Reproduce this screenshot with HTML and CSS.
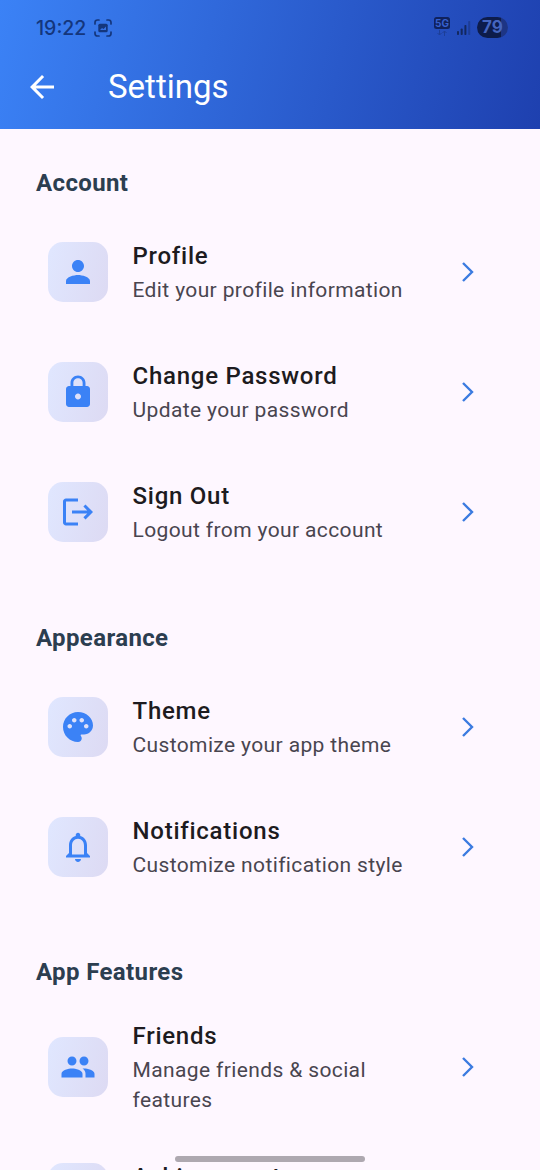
FILE: index.html
```html
<!DOCTYPE html>
<html lang="en"><head><meta charset="utf-8"><title>Settings</title><link rel="stylesheet" href="styles.css"></head>
<body>
<div class="screen">
<header class="appbar">
  <div class="status">
    <span class="clock">19:22</span>
    <svg class="shot" width="18" height="18" viewBox="0 0 18 18" fill="none" stroke="currentColor" stroke-width="1.700" stroke-linecap="round"><path d="M1 5V3.500Q1 1 3.500 1H5M13 1h1.500Q17 1 17 3.500V5M17 13v1.500Q17 17 14.500 17H13M5 17H3.500Q1 17 1 14.500V13"/><rect x="4.300" y="4.700" width="9.400" height="8.600" rx="1.500" fill="currentColor" stroke="none"/><path d="M6 11l2-2 1.500 1 2.500-2.500V11z" fill="#3470e2" stroke="none"/></svg>
    <div class="net"><span class="net-label">5G</span><svg width="12" height="6" viewBox="0 0 12 6" fill="none" stroke="currentColor" stroke-width="1"><path d="M3.500 0v5M1.500 3l2 2 2-2M8.500 6V1M6.500 3l2-2 2 2"/></svg></div>
    <svg class="signal" width="14" height="14" viewBox="0 0 14 14" fill="currentColor"><rect x="0" y="10" width="2" height="4" rx=".8"/><rect x="3.700" y="7.500" width="2" height="6.500" rx=".8"/><rect x="7.400" y="4" width="2" height="10" rx=".8"/><rect x="11.200" y="0" width="2" height="14" rx=".8" opacity=".4"/></svg>
    <span class="battery">79</span>
  </div>
  <div class="toolbar">
    <svg class="back" width="36" height="36" viewBox="0 0 24 24" fill="#fff"><path d="M20 11H7.830l5.590-5.590L12 4l-8 8 8 8 1.410-1.410L7.830 13H20v-2z"/></svg>
    <h1>Settings</h1>
  </div>
</header>
<main>
<section>
  <h2>Account</h2>
  <div class="row"><div class="tile"><svg viewBox="0 0 24 24"><path d="M12 12c2.210 0 4-1.790 4-4s-1.790-4-4-4-4 1.790-4 4 1.790 4 4 4zm0 2c-2.670 0-8 1.340-8 4v2h16v-2c0-2.660-5.330-4-8-4z"/></svg></div><div class="text"><h3>Profile</h3><p>Edit your profile information</p></div><svg class="chev" viewBox="0 0 13 20"><path d="M2 1l9 9-9 9"/></svg></div>
  <div class="row"><div class="tile"><svg viewBox="0 0 24 24"><path d="M18 8h-1V6c0-2.760-2.240-5-5-5S7 3.240 7 6v2H6c-1.100 0-2 .9-2 2v10c0 1.100.9 2 2 2h12c1.100 0 2-.9 2-2V10c0-1.100-.9-2-2-2zm-6 9c-1.100 0-2-.9-2-2s.9-2 2-2 2 .9 2 2-.9 2-2 2zm3.100-9H8.900V6c0-1.710 1.390-3.100 3.100-3.100 1.710 0 3.100 1.390 3.100 3.100v2z"/></svg></div><div class="text"><h3>Change Password</h3><p>Update your password</p></div><svg class="chev" viewBox="0 0 13 20"><path d="M2 1l9 9-9 9"/></svg></div>
  <div class="row"><div class="tile"><svg viewBox="0 0 24 24"><path d="M17 7l-1.410 1.410L18.170 11H8v2h10.170l-2.580 2.580L17 17l5-5zM4 5h8V3H4c-1.100 0-2 .9-2 2v14c0 1.100.9 2 2 2h8v-2H4V5z"/></svg></div><div class="text"><h3>Sign Out</h3><p>Logout from your account</p></div><svg class="chev" viewBox="0 0 13 20"><path d="M2 1l9 9-9 9"/></svg></div>
</section>
<section>
  <h2>Appearance</h2>
  <div class="row"><div class="tile"><svg viewBox="0 0 24 24"><path d="M12 2C6.490 2 2 6.490 2 12s4.490 10 10 10c1.380 0 2.500-1.120 2.500-2.500 0-.61-.23-1.200-.64-1.670-.08-.1-.13-.21-.13-.33 0-.28.22-.5.5-.5H16c3.310 0 6-2.690 6-6 0-4.960-4.490-9-10-9zm5.500 11c-.83 0-1.500-.67-1.500-1.500s.67-1.500 1.500-1.500 1.500.67 1.500 1.500-.67 1.500-1.500 1.500zm-3-4c-.83 0-1.500-.67-1.500-1.500S13.670 6 14.500 6s1.500.67 1.500 1.500S15.330 9 14.500 9zM5 11.500c0-.83.67-1.500 1.500-1.500s1.500.67 1.500 1.500S7.330 13 6.500 13 5 12.330 5 11.500zm6-4c0 .83-.67 1.500-1.500 1.500S8 8.330 8 7.500 8.670 6 9.500 6s1.500.67 1.500 1.500z"/></svg></div><div class="text"><h3>Theme</h3><p>Customize your app theme</p></div><svg class="chev" viewBox="0 0 13 20"><path d="M2 1l9 9-9 9"/></svg></div>
  <div class="row"><div class="tile"><svg viewBox="0 0 24 24"><path d="M12 22c1.100 0 2-.9 2-2h-4c0 1.100.9 2 2 2zm6-6v-5c0-3.070-1.630-5.640-4.500-6.320V4c0-.83-.67-1.500-1.500-1.500s-1.500.67-1.500 1.500v.68C7.640 5.360 6 7.920 6 11v5l-2 2v1h16v-1l-2-2zm-2 1H8v-6c0-2.480 1.510-4.500 4-4.500s4 2.020 4 4.500v6z"/></svg></div><div class="text"><h3>Notifications</h3><p>Customize notification style</p></div><svg class="chev" viewBox="0 0 13 20"><path d="M2 1l9 9-9 9"/></svg></div>
</section>
<section>
  <h2>App Features</h2>
  <div class="row tall"><div class="tile"><svg viewBox="0 0 24 24"><path d="M16 11c1.660 0 2.990-1.340 2.990-3S17.660 5 16 5s-3 1.340-3 3 1.340 3 3 3zm-8 0c1.660 0 2.990-1.340 2.990-3S9.660 5 8 5 5 6.340 5 8s1.340 3 3 3zm0 2c-2.330 0-7 1.170-7 3.500V19h14v-2.500c0-2.330-4.670-3.500-7-3.500zm8 0c-.29 0-.62.02-.97.05 1.160.84 1.970 1.970 1.970 3.450V19h6v-2.500c0-2.330-4.670-3.500-7-3.500z"/></svg></div><div class="text"><h3>Friends</h3><p>Manage friends &amp; social features</p></div><svg class="chev" viewBox="0 0 13 20"><path d="M2 1l9 9-9 9"/></svg></div>
  <div class="row"><div class="tile"></div><div class="text title-only"><h3>Achievements</h3></div></div>
</section>
</main>
<div class="handle"></div>
</div>
</body></html>
```
FILE: styles.css
```css
*{box-sizing:border-box}
body{margin:0;font-family:Roboto,sans-serif;background:#fef7ff}
h1,h2,h3,p{margin:0}
svg{display:block;flex:none}
.screen{position:relative;width:540px;height:1170px;overflow:hidden}
.appbar{height:129px;background:linear-gradient(103.4deg,#3b82f6,#1e40af);color:#fff}
.status{height:45px;padding:10px 32px 0 36px;display:flex;align-items:center;color:#13285f}
.clock{font:500 19.5px Inter,sans-serif;width:50px;margin-right:8px;color:#14367c}
.shot{color:#14367c}
.net{margin-left:auto;display:flex;flex-direction:column;align-items:center;gap:1px;margin:-2px 7px 0 auto}
.net svg{opacity:.4}
.net-label{width:16px;height:12px;border-radius:2.5px;background:#10225d;color:#3660cf;font:700 10px/12px Inter,sans-serif;text-align:center}
.signal{margin-right:6px}
.battery{width:31px;height:21px;border-radius:11px;background:linear-gradient(90deg,#0d1c4b 79%,#1d3585 79%);color:#4566c0;font:700 17px/21px Inter,sans-serif;text-align:center}
.toolbar{height:84px;display:flex;align-items:center;padding-left:24px}
.back{margin-right:48px}
h1{font-weight:400;font-size:33px;line-height:42px}
main{padding:36px 36px 0}
section{margin-bottom:47.5px}
h2{font-size:24px;line-height:36px;font-weight:700;letter-spacing:.375px;color:#2c3e50;margin-bottom:11px}
.row{height:120px;padding:0 30px 0 12px;display:flex;align-items:center}
.row.tall{height:132px}
.tile{flex:none;width:60px;height:60px;border-radius:15px;background:linear-gradient(105deg,#e0e7ff,#dddaf3);display:grid;place-items:center;margin-right:24.5px}
.tile svg{width:36px;height:36px;fill:#3b82f6}
.text{flex:1;padding-right:30px}
.title-only{padding-bottom:31px}
h3{font-size:24px;line-height:34px;padding-bottom:2px;font-weight:500;letter-spacing:.75px;color:#1d1b20}
p{font-size:21px;line-height:30px;letter-spacing:.375px;color:#49454f}
.chev{width:13px;height:20px;fill:none;stroke:#3b7be0;stroke-width:2.4}
.handle{position:absolute;left:175px;top:1156px;width:190px;height:6px;border-radius:3px;background:#aea8b0}
```
